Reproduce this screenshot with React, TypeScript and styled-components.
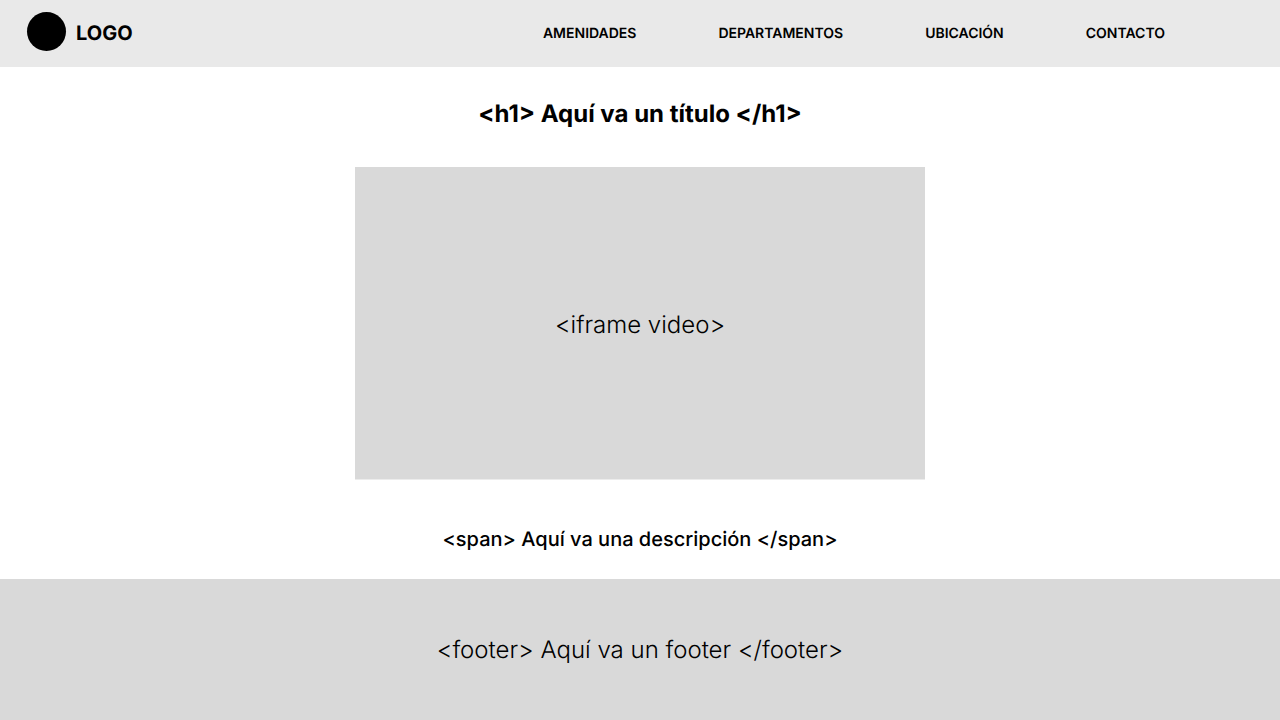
import React from "react";
import styled, { createGlobalStyle } from "styled-components";

const GlobalStyle = createGlobalStyle`
  * { box-sizing: border-box; }
  body {
    margin: 0;
    background: #fff;
    color: #000;
    font-family: Inter, "Liberation Sans", sans-serif;
    text-rendering: geometricPrecision;
  }
`;

const Page = styled.div`
  display: flex;
  flex-direction: column;
  min-height: 100vh;
`;

const Header = styled.header`
  display: flex;
  align-items: center;
  justify-content: space-between;
  padding: 12px 115px 14px 27px;
  background: #e9e9e9;
`;

const Brand = styled.a`
  display: flex;
  align-items: center;
  gap: 10px;
  color: inherit;
  font-size: 20px;
  font-weight: 700;
  line-height: 24px;
  text-decoration: none;
`;

const BrandMark = styled.span`
  width: 39px;
  height: 39px;
  margin-bottom: 2px;
  border-radius: 50%;
  background: #000;
`;

const Nav = styled.nav`
  display: flex;
  gap: 82px;
  padding-top: 2px;
`;

const NavLink = styled.a`
  color: inherit;
  font-size: 14px;
  font-weight: 600;
  line-height: 16px;
  text-decoration: none;
`;

const Main = styled.main`
  display: flex;
  flex: 1;
  flex-direction: column;
  align-items: center;
  padding: 32px 24px 24px;
`;

const Title = styled.h1`
  margin: 0 0 38px;
  font-size: 24px;
  font-weight: 700;
  line-height: 30px;
`;

const Video = styled.div`
  display: flex;
  align-items: center;
  justify-content: center;
  width: 100%;
  max-width: 570px;
  min-height: 313px;
  margin-bottom: 43px;
  padding-top: 4px;
  border-bottom: 1px solid #ececec;
  background: #d9d9d9;
  font-size: 24px;
  font-weight: 300;
  line-height: 28px;
`;

const Description = styled.span`
  font-size: 20px;
  font-weight: 500;
  line-height: 32px;
`;

const Footer = styled.footer`
  padding: 57px 24px 56px;
  background: #d9d9d9;
  font-size: 24px;
  font-weight: 300;
  line-height: 28px;
  text-align: center;
`;

const links = [
  { label: "AMENIDADES", href: "#amenidades" },
  { label: "DEPARTAMENTOS", href: "#departamentos" },
  { label: "UBICACIÓN", href: "#ubicacion" },
  { label: "CONTACTO", href: "#contacto" },
];

export default function App() {
  return (
    <Page>
      <GlobalStyle />
      <Header>
        <Brand href="#">
          <BrandMark />
          LOGO
        </Brand>
        <Nav>
          {links.map(({ label, href }) => (
            <NavLink key={href} href={href}>{label}</NavLink>
          ))}
        </Nav>
      </Header>
      <Main>
        <Title>{"<h1> Aquí va un título </h1>"}</Title>
        <Video>{"<iframe video>"}</Video>
        <Description>{"<span> Aquí va una descripción </span>"}</Description>
      </Main>
      <Footer>{"<footer> Aquí va un footer </footer>"}</Footer>
    </Page>
  );
}
